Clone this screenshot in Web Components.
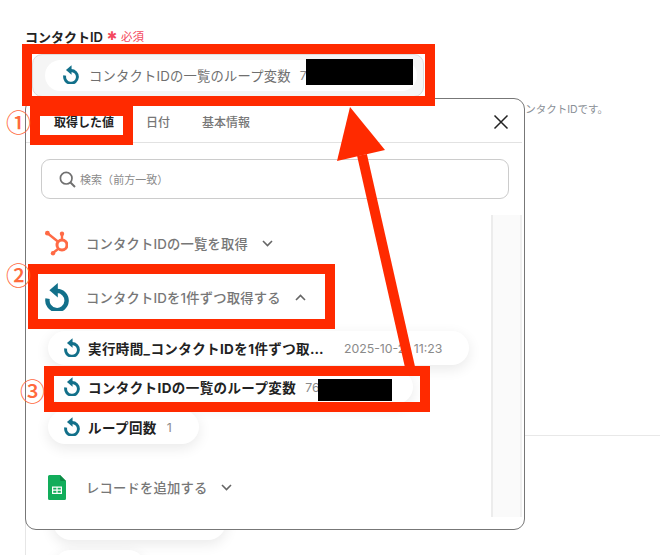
<!doctype html>
<html lang="ja"><head><meta charset="utf-8"><title>コンタクトID</title>
<style>
html,body{margin:0;padding:0;background:#fff}
body{width:660px;height:555px;overflow:hidden;position:relative;font-family:Inter,"Noto Sans CJK JP",sans-serif}
</style></head><body>
<x-page>
  <x-field label="コンタクトID" slot="field">
    <x-pill value="7" plain><span>コンタクトIDの一覧のループ変数</span></x-pill>
  </x-field>
</x-page>
<x-modal>
  <x-group icon="hubspot" chev="down" style="--top:14px">コンタクトIDの一覧を取得</x-group>
  <x-group icon="loop" chev="up" style="--top:26px">コンタクトIDを1件ずつ取得する</x-group>
  <x-pill value="2025-10-21 11:23" bold style="--w:421px;--top:20px;--gap:20px">実行時間_コンタクトIDを1件ずつ取…</x-pill>
  <x-pill value="76" bold style="--w:365px;--top:5px;--gap:9px">コンタクトIDの一覧のループ変数</x-pill>
  <x-pill value="1" bold style="--w:151px;--top:6px;--gap:10px">ループ回数</x-pill>
  <x-group icon="sheets" chev="down" style="--top:29px">レコードを追加する</x-group>
</x-modal>
<x-notes></x-notes>
<script>
const ICONS={
 loop:'<svg viewBox="0 0 24 28" width="100%" height="100%" style="display:block"><path d="M12 7.9A9.6 9.6 0 1 1 2.6 15.6" fill="none" stroke="#12708a" stroke-width="4.4"/><path d="M12.8 0V14.5L4.4 7.2Z" fill="#12708a"/></svg>',
 hubspot:'<svg viewBox="0 0 23 26" width="100%" height="100%" style="display:block"><g fill="none" stroke="#ff6a45" stroke-width="2.4" stroke-linecap="round"><circle cx="17" cy="15" r="5" stroke-width="3"/><path d="M17 9V4M2.5 3.3 12.5 11.2M13 19 8 23"/></g><circle cx="17" cy="3.8" r="2.2" fill="#ff6a45"/><circle cx="2.4" cy="3.2" r="2.4" fill="#ff6a45"/><circle cx="8" cy="23.2" r="2.2" fill="#ff6a45"/></svg>',
 sheets:'<svg viewBox="0 0 18 25" width="100%" height="100%" style="display:block"><path d="M1.5 0H12L18 6V23.5A1.5 1.5 0 0 1 16.5 25H1.5A1.5 1.5 0 0 1 0 23.5V1.5A1.5 1.5 0 0 1 1.5 0Z" fill="#12ad5b"/><path d="M12 0 18 6H13.2A1.2 1.2 0 0 1 12 4.8Z" fill="#0c8a45"/><path d="M4 11.5H14V19H4ZM5.2 12.7V14.6H8.4V12.7ZM9.6 12.7V14.6H12.8V12.7ZM5.2 15.8V17.8H8.4V15.8ZM9.6 15.8V17.8H12.8V15.8Z" fill="#fff" fill-rule="evenodd"/></svg>'
};
class Base extends HTMLElement{
  render(html){ if(!this.shadowRoot) this.attachShadow({mode:'open'}); this.shadowRoot.innerHTML=html; }
}
customElements.define('x-icon',class extends Base{connectedCallback(){
  this.render(`<style>:host{display:block;flex:none}</style>${ICONS[this.getAttribute('name')]||''}`);
}});
customElements.define('x-page',class extends Base{connectedCallback(){
  this.render(`<style>
  :host{display:block;height:555px;padding:28px 0 0 25px;box-sizing:border-box;overflow:hidden}
  .desc{margin:5px 0 0;text-align:right;padding-right:52px;font-size:10.5px;line-height:16px;color:#8a8f96;height:16px}
  .sec{margin-top:317px;height:120px;overflow:hidden;border-left:1px solid #e6e6e6;border-top:1px solid #e8e8e8;padding:0 0 0 27px;display:flex;flex-direction:column;gap:10px}
  .g{background:#fff;border-radius:20px;box-shadow:0 4px 14px rgba(0,0,0,.09);height:36px;flex:none}
  .a{width:173px;margin-top:68px}.b{width:93px}
  </style><slot name="field"></slot>
  <p class="desc">のコンタクトIDです。</p>
  <div class="sec"><div class="g a"></div><div class="g b"></div></div>`);
}});
customElements.define('x-field',class extends Base{connectedCallback(){
  this.render(`<style>
  :host{display:block;width:400px}
  .l{display:flex;align-items:center;height:16px;font-size:13px;font-weight:600;color:#222;white-space:nowrap}
  .s{margin-left:4px;font-size:11.5px;font-weight:400;color:#f4485e;display:flex;align-items:center;gap:4px}
  .b{margin-top:10px;margin-left:7px;box-sizing:border-box;width:392px;height:43px;padding:5px 6px 5px 12px;border:1px solid #ddd;border-radius:10px;background:#f5f5f5}
  .s b{font-size:12px;font-weight:400;line-height:10px}
  </style><div class="l">${this.getAttribute('label')}<span class="s"><b>✱</b>必須</span></div><div class="b"><slot></slot></div>`);
}});
customElements.define('x-pill',class extends Base{connectedCallback(){
  const bold=this.hasAttribute('bold');
  this.render(`<style>
  :host{display:flex;align-items:center;box-sizing:border-box;background:#fff;white-space:nowrap;
    width:var(--w,100%);height:${bold?34:31}px;margin-top:var(--top,0);margin-left:${bold?22:0}px;padding-left:${bold?16:18}px;border-radius:17px;
    box-shadow:${bold?'0 4px 14px rgba(0,0,0,.09)':'none'};font-size:${bold?13.5:13.3}px}
  x-icon{width:16px;height:19px;margin-top:-2px}
  .t{margin-left:${bold?8:10}px;font-weight:${bold?700:400};color:${bold?'#222':'#6f6f6f'};letter-spacing:${bold?.4:.2}px}
  .v{margin-left:var(--gap,9px);font-size:12.3px;color:#8a8a8a}
  </style><x-icon name="loop"></x-icon><span class="t"><slot></slot></span><span class="v">${this.getAttribute('value')||''}</span>`);
}});
customElements.define('x-group',class extends Base{connectedCallback(){
  const icon=this.getAttribute('icon'),up=this.getAttribute('chev')==='up';
  const sz={hubspot:[23,26,19],loop:[24,28,19],sheets:[18,25,22]}[icon];
  this.render(`<style>
  :host{display:flex;align-items:center;height:28px;margin-top:var(--top,0);font-size:13.3px;font-weight:500;color:#777;letter-spacing:.2px;white-space:nowrap}
  .i{width:60px;flex:none;padding-left:${sz[2]}px;box-sizing:border-box}
  x-icon{width:${sz[0]}px;height:${sz[1]}px}
  svg.c{margin-left:14px;flex:none}
  </style><div class="i"><x-icon name="${icon}"></x-icon></div><slot></slot>
  <svg class="c" width="11" height="7" viewBox="0 0 11 7"><path d="${up?'M1 6 5.5 1.5 10 6':'M1 1 5.5 5.5 10 1'}" fill="none" stroke="#666" stroke-width="1.6"/></svg>`);
}});
customElements.define('x-modal',class extends Base{connectedCallback(){
  this.render(`<style>
  :host{position:absolute;left:25px;top:98px;width:500px;height:432px;box-sizing:border-box;background:#fff;border:1px solid #777;border-radius:11px;display:block}
  .tabs{display:flex;align-items:center;height:44px;padding-top:2px;box-sizing:border-box;margin:0 2px 0 0;border-bottom:1px solid #e2e2e2;font-size:12px;font-weight:500;color:#777;padding-left:28px}
  .tabs span{margin-right:32px;white-space:nowrap}.tabs .on{color:#222;font-weight:700}
  .tabs svg{margin-left:auto;margin-right:13px}
  .search{margin:16px 15px 0 15px;height:40px;box-sizing:border-box;border:1px solid #ccc;border-radius:9px;display:flex;align-items:center;padding-left:17px;font-size:11px;color:#8a8a8a;gap:4px;letter-spacing:.05px}
  .body{display:flex;margin-top:16px;height:302px}
  .list{flex:1;min-width:0}
  .track{flex:none;width:31px;margin-right:2px;box-sizing:border-box;background:#fafafa;border-left:2px solid #ececec;border-right:2px solid #f0f0f0}
  </style>
  <div class="tabs"><span class="on">取得した値</span><span>日付</span><span>基本情報</span>
   <svg width="16" height="16" viewBox="0 0 16 16"><path d="M1.5 1.5 14.5 14.5M14.5 1.5 1.5 14.5" stroke="#222" stroke-width="1.5"/></svg></div>
  <div class="search"><svg width="17" height="17" viewBox="0 0 17 17"><circle cx="7.2" cy="7.2" r="5.8" fill="none" stroke="#707070" stroke-width="1.7"/><path d="M11.5 11.5 16 16" stroke="#707070" stroke-width="2"/></svg><span>検索（前方一致）</span></div>
  <div class="body"><div class="list"><slot></slot></div><div class="track"></div></div>`);
}});
customElements.define('x-notes',class extends Base{connectedCallback(){
  this.render(`<style>
  :host{position:absolute;inset:0;display:block;pointer-events:none}
  svg{position:absolute;left:0;top:0}
  .n{position:absolute;font:500 25px/28px "Noto Sans CJK JP",sans-serif;color:#ff6a3d;width:24px;text-align:center}
  </style>
  <svg width="660" height="555" viewBox="0 0 660 555" fill="none">
   <rect x="306" y="59" width="107" height="26" fill="#000"/>
   <rect x="318" y="379" width="74" height="22" fill="#000"/>
   <g stroke="#ff2a00" stroke-width="10">
    <rect x="27" y="49" width="403" height="52"/>
    <rect x="35" y="111" width="93" height="29"/>
    <rect x="33" y="269" width="297" height="55"/>
    <rect x="49" y="371" width="376" height="36"/>
   </g>
   <path d="M410 367 362 155" stroke="#ff2a00" stroke-width="10"/>
   <path d="M350 107 385 150 337 161Z" fill="#ff2a00"/>
  </svg>
  <span class="n" style="left:6px;top:107px">①</span>
  <span class="n" style="left:6px;top:260px">②</span>
  <span class="n" style="left:20px;top:376px">③</span>`);
}});
</script>
</body></html>
